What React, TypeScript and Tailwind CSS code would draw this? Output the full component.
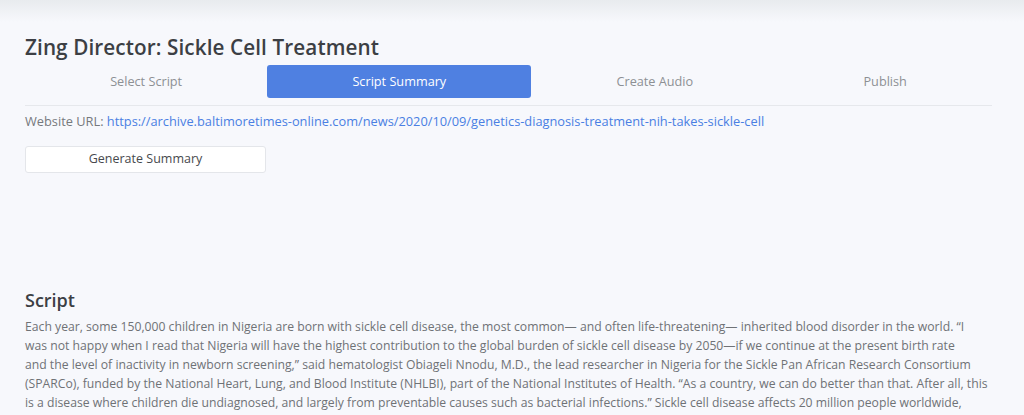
import React from "react";

const lines = [
  "Each year, some 150,000 children in Nigeria are born with sickle cell disease, the most common\u2014 and often life-threatening\u2014 inherited blood disorder in the world. \u201cI",
  "was not happy when I read that Nigeria will have the highest contribution to the global burden of sickle cell disease by 2050\u2014if we continue at the present birth rate",
  "and the level of inactivity in newborn screening,\u201d said hematologist Obiageli Nnodu, M.D., the lead researcher in Nigeria for the Sickle Pan African Research Consortium",
  "(SPARCo), funded by the National Heart, Lung, and Blood Institute (NHLBI), part of the National Institutes of Health. \u201cAs a country, we can do better than that. After all, this",
  "is a disease where children die undiagnosed, and largely from preventable causes such as bacterial infections.\u201d Sickle cell disease affects 20 million people worldwide,",
];

const tabs = ["Select Script", "Script Summary", "Create Audio", "Publish"];

export default function App() {
  return (
    <div
      className="w-[1024px] h-[415px] overflow-hidden bg-[#f7f8fc]"
      style={{ fontFamily: '"Open Sans", "Liberation Sans", sans-serif' }}
    >
      <div className="h-[22px] bg-gradient-to-b from-[#e8ebee] to-[#f7f8fc]" />
      <div className="pl-[25px] pr-[32px]">
        <h1 className="mt-[12px] text-[20.7px] leading-[26px] font-semibold text-[#3c3f44] tracking-[0.1px]">
          Zing Director: Sickle Cell Treatment
        </h1>
        <div className="mt-[5px] flex border-b border-[#e6e8ec] pb-[7px]">
          {tabs.map((t, i) => (
            <div
              key={t}
              className={
                i === 1
                  ? "flex-auto h-[33px] flex items-center justify-center rounded-[3px] bg-[#4f80e1] text-white text-[12.7px]"
                  : "flex-auto h-[33px] flex items-center justify-center text-[#8d9094] text-[12.7px]"
              }
            >
              {t}
            </div>
          ))}
        </div>
        <div className="mt-[6px] text-[12.8px] leading-[18px] text-[#76797d]">
          Website URL:{" "}
          <a className="text-[#4a7fe3]" href="#">
            https://archive.baltimoretimes-online.com/news/2020/10/09/genetics-diagnosis-treatment-nih-takes-sickle-cell
          </a>
        </div>
        <button className="mt-[16px] w-[241px] h-[27px] bg-white border border-[#e4e6ea] rounded-[3px] text-[12.5px] text-[#47494d] flex items-center justify-center">
          Generate Summary
        </button>
        <h2 className="mt-[115px] text-[18px] leading-[24px] font-semibold text-[#3c3f44]">Script</h2>
        <div className="mt-[5px] text-[12.2px] leading-[19px] text-[#6f7276]">
          {lines.map((l, i) => (
            <div key={i} className="whitespace-nowrap">
              {l}
            </div>
          ))}
        </div>
      </div>
    </div>
  );
}
